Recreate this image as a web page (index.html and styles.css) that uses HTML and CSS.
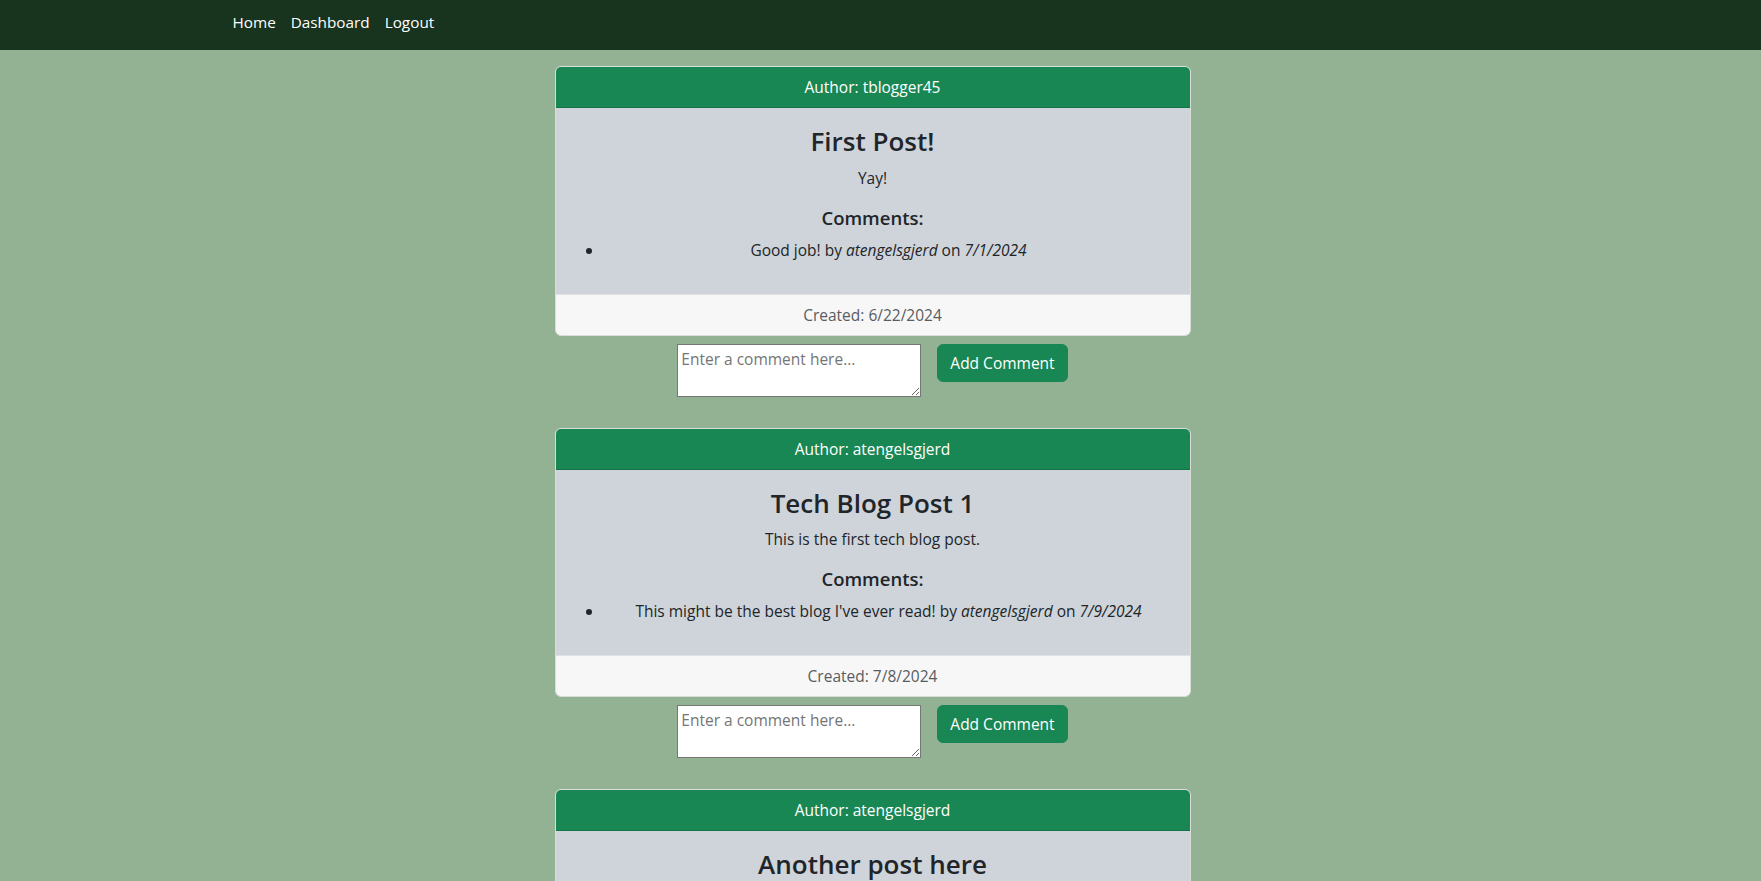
FILE: index.html
```html
<!DOCTYPE html>
<html lang="en">
<head>
<meta charset="utf-8">
<title>Tech Blog</title>
<link rel="stylesheet" href="styles.css">
</head>
<body>
<nav class="navbar">
  <div class="container nav-inner">
    <a class="nav-link" href="#">Home</a>
    <a class="nav-link" href="#">Dashboard</a>
    <a class="nav-link" href="#">Logout</a>
  </div>
</nav>
<main class="container">
  <div class="column">
    <article class="post">
      <div class="card">
        <div class="card-header">Author: tblogger45</div>
        <div class="card-body">
          <h3 class="post-title">First Post!</h3>
          <p class="post-text">Yay!</p>
          <h5 class="comments-title">Comments:</h5>
          <ul class="comments">
            <li>Good job! by <em>atengelsgjerd</em> on <em>7/1/2024</em></li>
          </ul>
        </div>
        <div class="card-footer">Created: 6/22/2024</div>
      </div>
      <form class="comment-form">
        <textarea class="comment-input" placeholder="Enter a comment here..."></textarea>
        <button type="button" class="btn">Add Comment</button>
      </form>
    </article>

    <article class="post">
      <div class="card">
        <div class="card-header">Author: atengelsgjerd</div>
        <div class="card-body">
          <h3 class="post-title">Tech Blog Post 1</h3>
          <p class="post-text">This is the first tech blog post.</p>
          <h5 class="comments-title">Comments:</h5>
          <ul class="comments">
            <li>This might be the best blog I've ever read! by <em>atengelsgjerd</em> on <em>7/9/2024</em></li>
          </ul>
        </div>
        <div class="card-footer">Created: 7/8/2024</div>
      </div>
      <form class="comment-form">
        <textarea class="comment-input" placeholder="Enter a comment here..."></textarea>
        <button type="button" class="btn">Add Comment</button>
      </form>
    </article>

    <article class="post">
      <div class="card">
        <div class="card-header">Author: atengelsgjerd</div>
        <div class="card-body">
          <h3 class="post-title">Another post here</h3>
          <p class="post-text">This is another post.</p>
          <h5 class="comments-title">Comments:</h5>
          <ul class="comments">
            <li>Nice! by <em>tblogger45</em> on <em>7/10/2024</em></li>
          </ul>
        </div>
        <div class="card-footer">Created: 7/9/2024</div>
      </div>
    </article>
  </div>
</main>
</body>
</html>
```
FILE: styles.css
```css
* { box-sizing: border-box; }

html, body {
  margin: 0;
  padding: 0;
}

body {
  background: #93b293;
  color: #212529;
  font-family: "Open Sans", "Noto Sans", sans-serif;
  font-size: 15.5px;
  line-height: 24px;
}

.container {
  width: 1320px;
  margin: 0 auto;
  padding: 0 12px;
  position: relative;
  left: -8px;
}

.navbar {
  background: #18341f;
  height: 50px;
}

.nav-inner {
  display: flex;
  padding-top: 10px;
}

.nav-link {
  color: #ffffff;
  text-decoration: none;
  padding: 0 7px 0 8px;
  line-height: 24px;
  font-size: 15.3px;
}

.column {
  width: 636px;
  margin: 16px auto 0;
}

.card {
  background: #ced4da;
  border: 1px solid #d7ddd7;
  border-radius: 6px;
  overflow: hidden;
  text-align: center;
}

.card-header {
  background: #198754;
  color: #ffffff;
  padding: 8px 16px;
  border-bottom: 1px solid #157347;
}

.card-body {
  padding: 16px;
}

.post-title {
  margin: 1px 0 7px;
  font-size: 26px;
  line-height: 33.6px;
  font-weight: 600;
}

.post-text {
  margin: 0 0 16px;
}

.comments-title {
  margin: 0 0 8px;
  font-size: 18.5px;
  line-height: 24px;
  font-weight: 600;
}

.comments {
  margin: 0 0 16px;
  padding-left: 32px;
}

.card-footer {
  background: #f7f7f7;
  color: #595c5f;
  padding: 8px 16px;
  border-top: 1px solid #dfe1e3;
}

.comment-form {
  display: flex;
  justify-content: center;
  align-items: flex-start;
  gap: 16px;
  margin: 8px 0 31px;
}

.comment-input {
  width: 244px;
  height: 53px;
  border: 1px solid #767676;
  background: #ffffff;
  font-family: "Open Sans", "Noto Sans", sans-serif;
  font-size: 15.5px;
  line-height: 20px;
  padding: 4px 3px;
  resize: vertical;
}

.comment-input::placeholder {
  color: #757575;
}

.btn {
  background: #198754;
  color: #ffffff;
  border: 1px solid #198754;
  border-radius: 6px;
  padding: 6px 12px;
  font-family: "Open Sans", "Noto Sans", sans-serif;
  font-size: 15.5px;
  line-height: 24px;
  height: 38px;
}
```
